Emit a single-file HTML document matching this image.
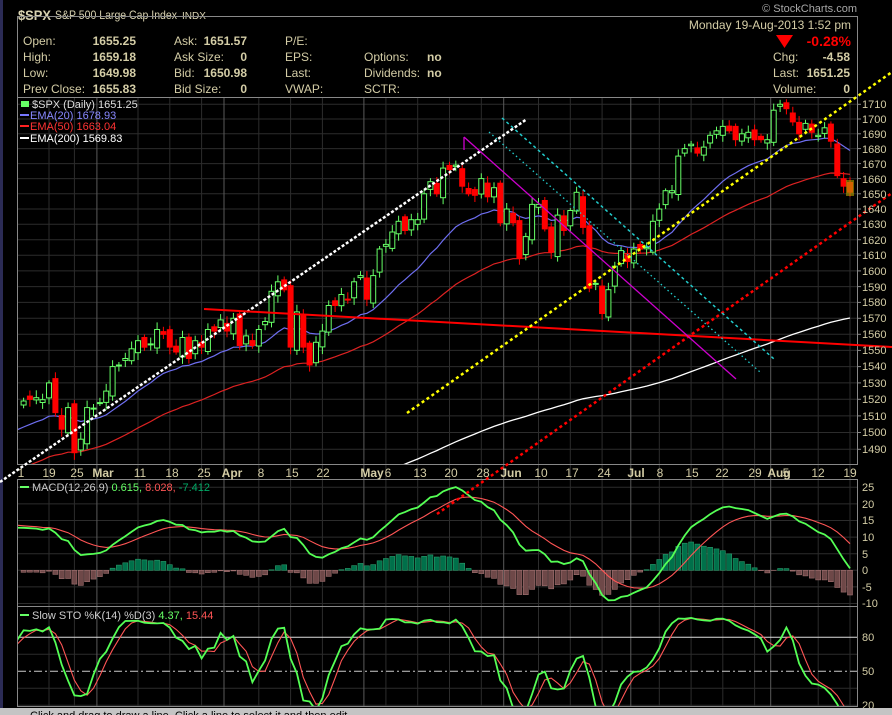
<!DOCTYPE html>
<html><head><meta charset="utf-8"><style>
html,body{margin:0;padding:0;background:#000;width:892px;height:715px;overflow:hidden}
svg{display:block}
text{font-family:"Liberation Sans",sans-serif}
</style></head><body>
<svg id="s" width="892" height="715" viewBox="0 0 892 715" xmlns="http://www.w3.org/2000/svg">
<rect width="892" height="715" fill="#000"/>
<rect x="0" y="0" width="3" height="708" fill="#2b2b55"/>
<defs>
<clipPath id="cp"><rect x="18" y="98" width="839" height="366"/></clipPath>
<clipPath id="cm"><rect x="18" y="480" width="839" height="127"/></clipPath>
<clipPath id="cs"><rect x="18" y="608" width="839" height="98"/></clipPath>
</defs>
<g id="grid"></g>
<!-- header -->
<text x="18" y="20" fill="#d8d2b0" font-size="14" font-weight="bold" textLength="33" lengthAdjust="spacingAndGlyphs">$SPX</text>
<text x="55" y="19" fill="#d8d2b0" font-size="12" textLength="122" lengthAdjust="spacingAndGlyphs">S&amp;P 500 Large Cap Index</text>
<text x="182" y="19" fill="#d8d2b0" font-size="10">INDX</text>
<text x="857" y="12" fill="#a8a8a8" font-size="11" text-anchor="end">© StockCharts.com</text>
<rect x="17.5" y="16.5" width="840" height="81" fill="none" stroke="#888"/>
<g fill="#d4cda6" font-size="12">
<text x="23" y="45">Open:</text><text x="23" y="61">High:</text><text x="23" y="77">Low:</text><text x="23" y="93">Prev Close:</text>
<g font-weight="bold" text-anchor="end"><text x="136" y="45">1655.25</text><text x="136" y="61">1659.18</text><text x="136" y="77">1649.98</text><text x="136" y="93">1655.83</text></g>
<text x="174" y="45">Ask:</text><text x="174" y="61">Ask Size:</text><text x="174" y="77">Bid:</text><text x="174" y="93">Bid Size:</text>
<g font-weight="bold" text-anchor="end"><text x="247" y="45">1651.57</text><text x="247" y="61">0</text><text x="247" y="77">1650.98</text><text x="247" y="93">0</text></g>
<text x="285" y="45">P/E:</text><text x="285" y="61">EPS:</text><text x="285" y="77">Last:</text><text x="285" y="93">VWAP:</text>
<text x="364" y="61">Options:</text><text x="364" y="77">Dividends:</text><text x="364" y="93">SCTR:</text>
<g font-weight="bold"><text x="427" y="61">no</text><text x="427" y="77">no</text></g>
<text x="851" y="29" text-anchor="end">Monday  19-Aug-2013  1:52 pm</text>
<text x="773" y="61">Chg:</text><text x="773" y="77">Last:</text><text x="773" y="93">Volume:</text>
<g font-weight="bold" text-anchor="end"><text x="850" y="61">-4.58</text><text x="850" y="77">1651.25</text><text x="850" y="93">0</text></g>
</g>
<polygon points="776,35 793,35 784.5,48" fill="#f00"/>
<text x="851" y="46" fill="#f00" font-size="14" font-weight="bold" text-anchor="end">-0.28%</text>
<!-- panels -->
<rect x="17.5" y="97.5" width="840" height="367" fill="none" stroke="#888"/>
<rect x="17.5" y="479.5" width="840" height="127" fill="none" stroke="#888"/>
<rect x="17.5" y="606.5" width="840" height="100" fill="none" stroke="#888"/>
<g id="price" clip-path="url(#cp)"></g>
<g id="macd" clip-path="url(#cm)"></g>
<g id="sto" clip-path="url(#cs)"></g>
<g id="over"></g>
<!-- price axis -->
<g fill="#d4cda6" font-size="11">
<text x="862" y="108">1710</text><text x="862" y="123">1700</text><text x="862" y="138">1690</text><text x="862" y="153">1680</text><text x="862" y="168">1670</text><text x="862" y="183">1660</text><text x="862" y="198">1650</text><text x="862" y="213">1640</text><text x="862" y="228">1630</text><text x="862" y="244">1620</text><text x="862" y="259">1610</text><text x="862" y="275">1600</text><text x="862" y="291">1590</text><text x="862" y="306">1580</text><text x="862" y="322">1570</text><text x="862" y="338">1560</text><text x="862" y="354">1550</text><text x="862" y="370">1540</text><text x="862" y="387">1530</text><text x="862" y="403">1520</text><text x="862" y="420">1510</text><text x="862" y="436">1500</text><text x="862" y="453">1490</text>
<text x="862" y="491">25</text><text x="862" y="508">20</text><text x="862" y="524">15</text><text x="862" y="541">10</text><text x="862" y="558">5</text><text x="862" y="574">0</text><text x="862" y="591">-5</text><text x="862" y="607">-10</text>
<text x="862" y="641">80</text><text x="862" y="675">50</text><text x="862" y="709">20</text>
</g>
<!-- x axis -->
<g fill="#d4cda6" font-size="12" text-anchor="middle">
<text x="21" y="477">1</text><text x="49" y="477">19</text><text x="77" y="477">25</text><text x="103" y="477" font-weight="bold">Mar</text><text x="140" y="477">11</text><text x="172" y="477">18</text><text x="204" y="477">25</text><text x="232" y="477" font-weight="bold">Apr</text><text x="261" y="477">8</text><text x="292" y="477">15</text><text x="323" y="477">22</text><text x="372" y="477" font-weight="bold">May</text><text x="388" y="477">6</text><text x="420" y="477">13</text><text x="451" y="477">20</text><text x="483" y="477">28</text><text x="511" y="477" font-weight="bold">Jun</text><text x="541" y="477">10</text><text x="572" y="477">17</text><text x="604" y="477">24</text><text x="636" y="477" font-weight="bold">Jul</text><text x="660" y="477">8</text><text x="692" y="477">15</text><text x="722" y="477">22</text><text x="755" y="477">29</text><text x="779" y="477" font-weight="bold">Aug</text><text x="786" y="477">5</text><text x="818" y="477">12</text><text x="850" y="477">19</text>
</g>
<!-- legends -->
<g font-size="11">
<rect x="21" y="101" width="8" height="6" fill="#6f6"/>
<text x="32" y="108" fill="#ddd">$SPX (Daily) 1651.25</text>
<rect x="20" y="114" width="9" height="2" fill="#7777ff"/><text x="30" y="119" fill="#8888ff">EMA(20) 1678.93</text>
<rect x="20" y="125" width="9" height="2" fill="#f22"/><text x="30" y="130" fill="#f33">EMA(50) 1663.04</text>
<rect x="20" y="137" width="9" height="2" fill="#fff"/><text x="30" y="142" fill="#fff">EMA(200) 1569.83</text>
<rect x="20" y="486" width="9" height="2" fill="#6f6"/><text x="32" y="491" fill="#ccc">MACD(12,26,9) <tspan fill="#6f6">0.615,</tspan> <tspan fill="#f55">8.028,</tspan> <tspan fill="#0a6">-7.412</tspan></text>
<rect x="20" y="614" width="9" height="2" fill="#6f6"/><text x="32" y="619" fill="#ccc">Slow STO %K(14) %D(3) <tspan fill="#6f6">4.37,</tspan> <tspan fill="#f55">15.44</tspan></text>
</g>
<rect x="0" y="708" width="892" height="7" fill="#c4c4c4"/>
<text x="30" y="719" fill="#000" font-size="11">Click and drag to draw a line. Click a line to select it and then edit.</text>
</svg>
<script>
var C=[1500,1507,1502,1498,1513,1495,1511,1512,1509,1518,
1517,1519,1520,1521,1519.8,1530,1512,1502,1515,1488,1496,1515,1514.7,
1518,1525,1540,1541,1545,1551,1556,1552,1554,1563,1560,1552,1549,1558,1545,1556,1552,1563,1562,1569,
1562,1570,1553,1559,1553,1563,1568,1587,1593,1588,1552,1574,1552,1541,1555,1562,1578,1578,1585,1582,1593,1597,
1582,1597,1614,1617,1625,1632,1626,1633,1633,1650,1658,1650,1667,1666,1669,1655,1650,1649,1660,1648,1654,1631,
1640,1631,1608,1622,1643,1643,1627,1612,1636,1626,1639,1651,1628,1589,1592,1573,1588,1603,1613,1606,
1614,1614,1615,1632,1640,1652,1652,1675,1680,1683,1677,1681,1689,1692,1695,1692,1686,1690,1691,1686,1686,1686,
1706,1710,1707,1698,1690,1697,1691,1689,1694,1685,1662,1655,1651];
var N=C.length;
function X(i){return 49+(i-15)*6.357}
function PY(p){return 104.3+2505*Math.log(1710/p)}
function MY(v){return 570.3-v*3.32}
function SY(v){return 637.3+(80-v)*1.133}
var g='',p='',m='',s='',o='';
for(var v=1490;v<=1710;v+=10){var y=PY(v).toFixed(1);g+='<line x1="18" x2="857" y1="'+y+'" y2="'+y+'" stroke="#2c2c2c"/><line x1="857" x2="861" y1="'+y+'" y2="'+y+'" stroke="#888"/>';}
for(var v=-10;v<=25;v+=5){var y=MY(v).toFixed(1);g+='<line x1="18" x2="857" y1="'+y+'" y2="'+y+'" stroke="#2c2c2c"/>';}
[20,35,65].forEach(function(v){var y=SY(v).toFixed(1);g+='<line x1="18" x2="857" y1="'+y+'" y2="'+y+'" stroke="#2c2c2c"/>';});
var wk=[15,19,29,34,39,48,53,58,68,73,78,83,92,97,102,111,116,121,126,136,141],mo=[23,43,65,87,107,129];
wk.forEach(function(i){var x=X(i).toFixed(1);g+='<line x1="'+x+'" x2="'+x+'" y1="98" y2="706" stroke="#2c2c2c"/>';});
mo.forEach(function(i){var x=(X(i)-3).toFixed(1);g+='<line x1="'+x+'" x2="'+x+'" y1="98" y2="706" stroke="#5a5a5a"/>';});
g+='<line x1="18" x2="857" y1="'+SY(80)+'" y2="'+SY(80)+'" stroke="#ddd"/>';
g+='<line x1="18" x2="857" y1="'+SY(50)+'" y2="'+SY(50)+'" stroke="#ccc" stroke-dasharray="8,3,2,3"/>';
document.getElementById('grid').innerHTML=g;
function ema(n,seed){var a=2/(n+1),e=seed,r=[];for(var i=0;i<N;i++){e=i?e+a*(C[i]-e):seed;r.push(e);}return r;}
var e20=ema(20,1488),e50=ema(50,1462),e200=ema(200,1403);
function pl(arr,fy,col,w){var pts=[];for(var i=0;i<N;i++){if(X(i)<10)continue;pts.push(X(i).toFixed(1)+','+fy(arr[i]).toFixed(1));}return '<polyline fill="none" stroke="'+col+'" stroke-width="'+(w||1)+'" points="'+pts.join(' ')+'"/>';}
p+=pl(e200,PY,'#fff',1.3)+pl(e50,PY,'#d22',1.2)+pl(e20,PY,'#6e6ef0',1.2);
for(var i=1;i<N;i++){var x=X(i);if(x<19)continue;var c=C[i],op=C[i-1]+3*Math.sin(i*1.7);
var hi=Math.max(op,c)+1.5+3*Math.abs(Math.sin(i*2.3)),lo=Math.min(op,c)-1.5-3*Math.abs(Math.cos(i*1.3));
var up=c>=op,col=up?'#6f6':'#f00',t=PY(Math.max(op,c)),b=PY(Math.min(op,c));if(b-t<1)b=t+1;
p+='<line x1="'+x.toFixed(1)+'" x2="'+x.toFixed(1)+'" y1="'+PY(hi).toFixed(1)+'" y2="'+PY(lo).toFixed(1)+'" stroke="'+col+'"/>';
p+='<rect x="'+(x-2.5).toFixed(1)+'" y="'+t.toFixed(1)+'" width="5" height="'+(b-t).toFixed(1)+'" fill="'+(up?'#000':'#f00')+'" stroke="'+col+'"/>';}
document.getElementById('price').innerHTML=p;
o+='<line x1="0" y1="482" x2="527" y2="119" stroke="#fff" stroke-width="2.5" stroke-dasharray="3,2"/>';
o+='<line x1="204" y1="309" x2="892" y2="347" stroke="#f00" stroke-width="2"/>';
o+='<line x1="407" y1="413" x2="892" y2="72" stroke="#ff0" stroke-width="2.5" stroke-dasharray="3,3"/>';
o+='<line x1="437" y1="514" x2="892" y2="193" stroke="#f00" stroke-width="2.5" stroke-dasharray="3,3"/>';
o+='<line x1="464" y1="137" x2="736" y2="379" stroke="#c0c" stroke-width="1.3"/>';
o+='<line x1="464" y1="137" x2="464" y2="150" stroke="#c0c" stroke-width="1.3"/>';
o+='<line x1="502" y1="118" x2="774" y2="359" stroke="#2cc" stroke-width="1.5" stroke-dasharray="3,3"/>';
o+='<line x1="489" y1="132" x2="760" y2="372" stroke="#2cc" stroke-width="1.3" stroke-dasharray="1.5,3"/>';
o+='<rect x="846" y="180" width="8" height="16" fill="#b5a400" opacity="0.6"/>';
document.getElementById('over').innerHTML=o;
var a12=2/13,a26=2/27,a9=0.2,E12=C[0]-5,E26=C[0]-22,SG=15,MA=[],SI=[];
for(var i=0;i<N;i++){if(i){E12+=a12*(C[i]-E12);E26+=a26*(C[i]-E26);}var mm=E12-E26;if(i)SG+=a9*(mm-SG);MA.push(mm);SI.push(SG);}
for(var i=0;i<N;i++){var x=X(i);if(x<19)continue;var h=MA[i]-SI[i],y0=MY(0),y1=MY(h);
m+='<rect x="'+(x-2.5).toFixed(1)+'" y="'+Math.min(y0,y1).toFixed(1)+'" width="5" height="'+Math.abs(y1-y0).toFixed(1)+'" fill="'+(h>=0?'#00704a':'#6e4848')+'" stroke="'+(h>=0?'#2a9a6a':'#a07070')+'" stroke-width="0.6"/>';}
m+=pl(SI,MY,'#f55',1.1)+pl(MA,MY,'#5f5',1.8);
document.getElementById('macd').innerHTML=m;
var H=[],L=[];for(var i=0;i<N;i++){var op=i?C[i-1]+3*Math.sin(i*1.7):C[0];H.push(Math.max(op,C[i])+1.5+3*Math.abs(Math.sin(i*2.3)));L.push(Math.min(op,C[i])-1.5-3*Math.abs(Math.cos(i*1.3)));}
var FK=[],K=[],D=[];
for(var i=0;i<N;i++){var hh=-1e9,ll=1e9;for(var j=Math.max(0,i-13);j<=i;j++){hh=Math.max(hh,H[j]);ll=Math.min(ll,L[j]);}FK.push((C[i]-ll)/(hh-ll)*100);}
function sma(a,i){var t=0,n=0;for(var j=Math.max(0,i-2);j<=i;j++){t+=a[j];n++;}return t/n;}
for(var i=0;i<N;i++)K.push(sma(FK,i));for(var i=0;i<N;i++)D.push(sma(K,i));
s+=pl(D,SY,'#f55',1.1)+pl(K,SY,'#5f5',1.8);
document.getElementById('sto').innerHTML=s;
</script>
</body></html>
